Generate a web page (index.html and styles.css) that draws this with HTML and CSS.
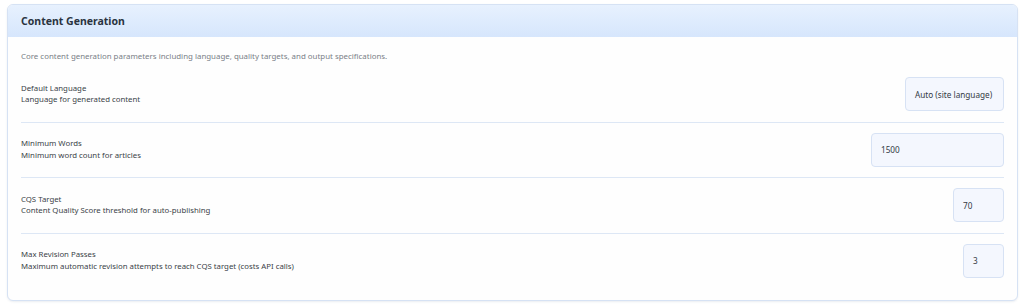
FILE: index.html
```html
<!DOCTYPE html>
<html lang="en">
<head>
<meta charset="utf-8">
<title>Content Generation</title>
<link rel="stylesheet" href="styles.css">
</head>
<body>
<section class="card">
  <header class="card-header">
    <h2 class="card-title">Content Generation</h2>
  </header>
  <div class="card-body">
    <p class="card-desc">Core content generation parameters including language, quality targets, and output specifications.</p>
    <div class="row">
      <div class="row-text">
        <div class="row-label">Default Language</div>
        <div class="row-help">Language for generated content</div>
      </div>
      <div class="field field-select">Auto (site language)</div>
    </div>
    <div class="row">
      <div class="row-text">
        <div class="row-label">Minimum Words</div>
        <div class="row-help">Minimum word count for articles</div>
      </div>
      <div class="field field-words">1500</div>
    </div>
    <div class="row">
      <div class="row-text">
        <div class="row-label">CQS Target</div>
        <div class="row-help">Content Quality Score threshold for auto-publishing</div>
      </div>
      <div class="field field-cqs">70</div>
    </div>
    <div class="row row-last">
      <div class="row-text">
        <div class="row-label">Max Revision Passes</div>
        <div class="row-help">Maximum automatic revision attempts to reach CQS target (costs API calls)</div>
      </div>
      <div class="field field-passes">3</div>
    </div>
  </div>
</section>
</body>
</html>
```

FILE: styles.css
```css
* { box-sizing: border-box; }
html, body { background: #ffffff; }
body {
  margin: 0;
  padding: 4px 6px 5px 7px;
  font-family: "Noto Sans", "Liberation Sans", sans-serif;
  color: #333a44;
}
.card {
  border: 1px solid #d6e2f4;
  border-radius: 6px;
  background: #fefefe;
  box-shadow: 0 1px 2px rgba(120, 140, 170, 0.15);
  overflow: hidden;
}
.card-header {
  background: linear-gradient(to bottom, #e7f1fe 0%, #d6e6fc 100%);
  padding: 9px 13px 9px;
}
.card-title {
  margin: 0;
  font-size: 10.5px;
  line-height: 14px;
  font-weight: 700;
  color: #2a3340;
}
.card-body {
  padding: 13px 13px 12px;
}
.card-desc {
  margin: 0 0 5px;
  font-size: 7.9px;
  line-height: 12px;
  color: #7a7f87;
}
.row {
  display: flex;
  align-items: center;
  justify-content: space-between;
  padding: 10px 0 10.5px;
  border-bottom: 1px solid #dde7f5;
}
.row-last { border-bottom: none; }
.row-text {
  font-size: 7.8px;
  line-height: 11.5px;
  color: #3a3f47;
}
.field {
  height: 34px;
  display: flex;
  align-items: center;
  padding: 0 9px;
  background: #f4f7fe;
  border: 1px solid #d7e2f4;
  border-radius: 4px;
  font-size: 8.2px;
  color: #333a44;
}
.field-select { width: 99px; }
.field-words { width: 133px; }
.field-cqs { width: 51px; }
.field-passes { width: 41px; }
```
